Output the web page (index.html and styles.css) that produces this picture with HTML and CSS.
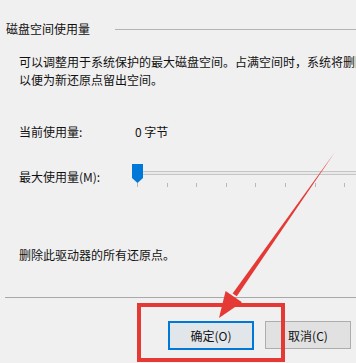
FILE: index.html
```html
<!DOCTYPE html>
<html lang="zh-CN">
<head>
<meta charset="utf-8">
<title>系统保护</title>
<link rel="stylesheet" href="styles.css">
</head>
<body>
<div class="page">
  <div class="group-head">
    <span class="group-title">磁盘空间使用量</span>
    <span class="group-line"></span>
  </div>
  <div class="desc">
    <div>可以调整用于系统保护的最大磁盘空间。占满空间时，系统将删除较旧的还原点，</div>
    <div>以便为新还原点留出空间。</div>
  </div>
  <div class="usage-row">
    <span class="label">当前使用量:</span>
    <span class="value">0 字节</span>
  </div>
  <div class="max-row">
    <span class="label">最大使用量(M):</span>
    <div class="slider">
      <div class="track"></div>
      <svg class="thumb" width="11" height="19" viewBox="0 0 11 19"><path d="M0 0H11V14L5.5 19L0 14Z" fill="#0078d7"/></svg>
      <div class="ticks">
        <i></i><i></i><i></i><i></i><i></i><i></i><i></i><i></i>
      </div>
    </div>
  </div>
  <div class="delete-text">删除此驱动器的所有还原点。</div>
  <div class="separator"></div>
  <div class="buttons">
    <button class="btn btn-ok">确定(O)</button>
    <button class="btn">取消(C)</button>
  </div>

  <div class="highlight"></div>
  <svg class="arrow" width="356" height="363" viewBox="0 0 356 363">
    <polygon points="335,152 236.8,296.3 232.6,293.5" fill="#e53935"/>
    <polygon points="219,318 242,302.3 225.6,290.9" fill="#e53935"/>
  </svg>
</div>
</body>
</html>
```

FILE: styles.css
```css
html, body {
  margin: 0;
  padding: 0;
  background: #f0f0f0;
}

.page {
  position: relative;
  width: 356px;
  height: 363px;
  overflow: hidden;
  font-family: "Noto Sans CJK SC", "Noto Sans", sans-serif;
  font-size: 12px;
  color: #111;
  background: #f0f0f0;
}

.group-head {
  display: flex;
  align-items: center;
  height: 18px;
  margin-top: 20px;
  padding-left: 6px;
}

.group-title {
  line-height: 18px;
  white-space: nowrap;
}

.group-line {
  flex: 1;
  height: 1px;
  margin-left: 25px;
  background: #b4b4b4;
}

.desc {
  margin-top: 15px;
  padding-left: 19px;
  line-height: 18px;
  white-space: nowrap;
}

.usage-row {
  display: flex;
  height: 18px;
  line-height: 18px;
  margin-top: 34px;
  padding-left: 19px;
}

.usage-row .label {
  width: 116px;
}

.max-row {
  display: flex;
  align-items: center;
  height: 24px;
  margin-top: 23px;
  padding-left: 19px;
}

.max-row .label {
  width: 113px;
  line-height: 18px;
  margin-top: 1px;
}

.slider {
  position: relative;
  flex: 1;
  height: 24px;
}

.track {
  margin-top: 7px;
  height: 2px;
  border-top: 1px solid #c6c6c6;
  border-bottom: 1px solid #c6c6c6;
  background: #e9e9e9;
}

.thumb {
  position: absolute;
  left: 0;
  top: 0;
  display: block;
}

.ticks {
  display: flex;
  gap: 28.6px;
  margin-top: 8px;
  padding-left: 5px;
}

.ticks i {
  display: block;
  width: 1px;
  height: 4px;
  background: #b8b8b8;
}

.delete-text {
  margin-top: 58px;
  padding-left: 19px;
  height: 18px;
  line-height: 18px;
}

.separator {
  margin-top: 33px;
  margin-left: 5px;
  height: 1px;
  background: #a8a8a8;
}

.buttons {
  display: flex;
  gap: 11px;
  margin-top: 23px;
  padding-left: 168px;
}

.btn {
  box-sizing: border-box;
  width: 86px;
  height: 28px;
  margin: 0;
  padding: 0;
  font-family: "Noto Sans CJK SC", "Noto Sans", sans-serif;
  font-size: 12px;
  color: #111;
  background: #e1e1e1;
  border: 1px solid #adadad;
  border-radius: 0;
}

.btn-ok {
  height: 29px;
  border: 2px solid #0078d7;
  background: #e1e6eb;
}

.highlight {
  position: absolute;
  left: 137px;
  top: 303px;
  width: 148px;
  height: 59px;
  box-sizing: border-box;
  border: 4px solid #e53935;
}

.arrow {
  position: absolute;
  left: 0;
  top: 0;
  display: block;
}
```
